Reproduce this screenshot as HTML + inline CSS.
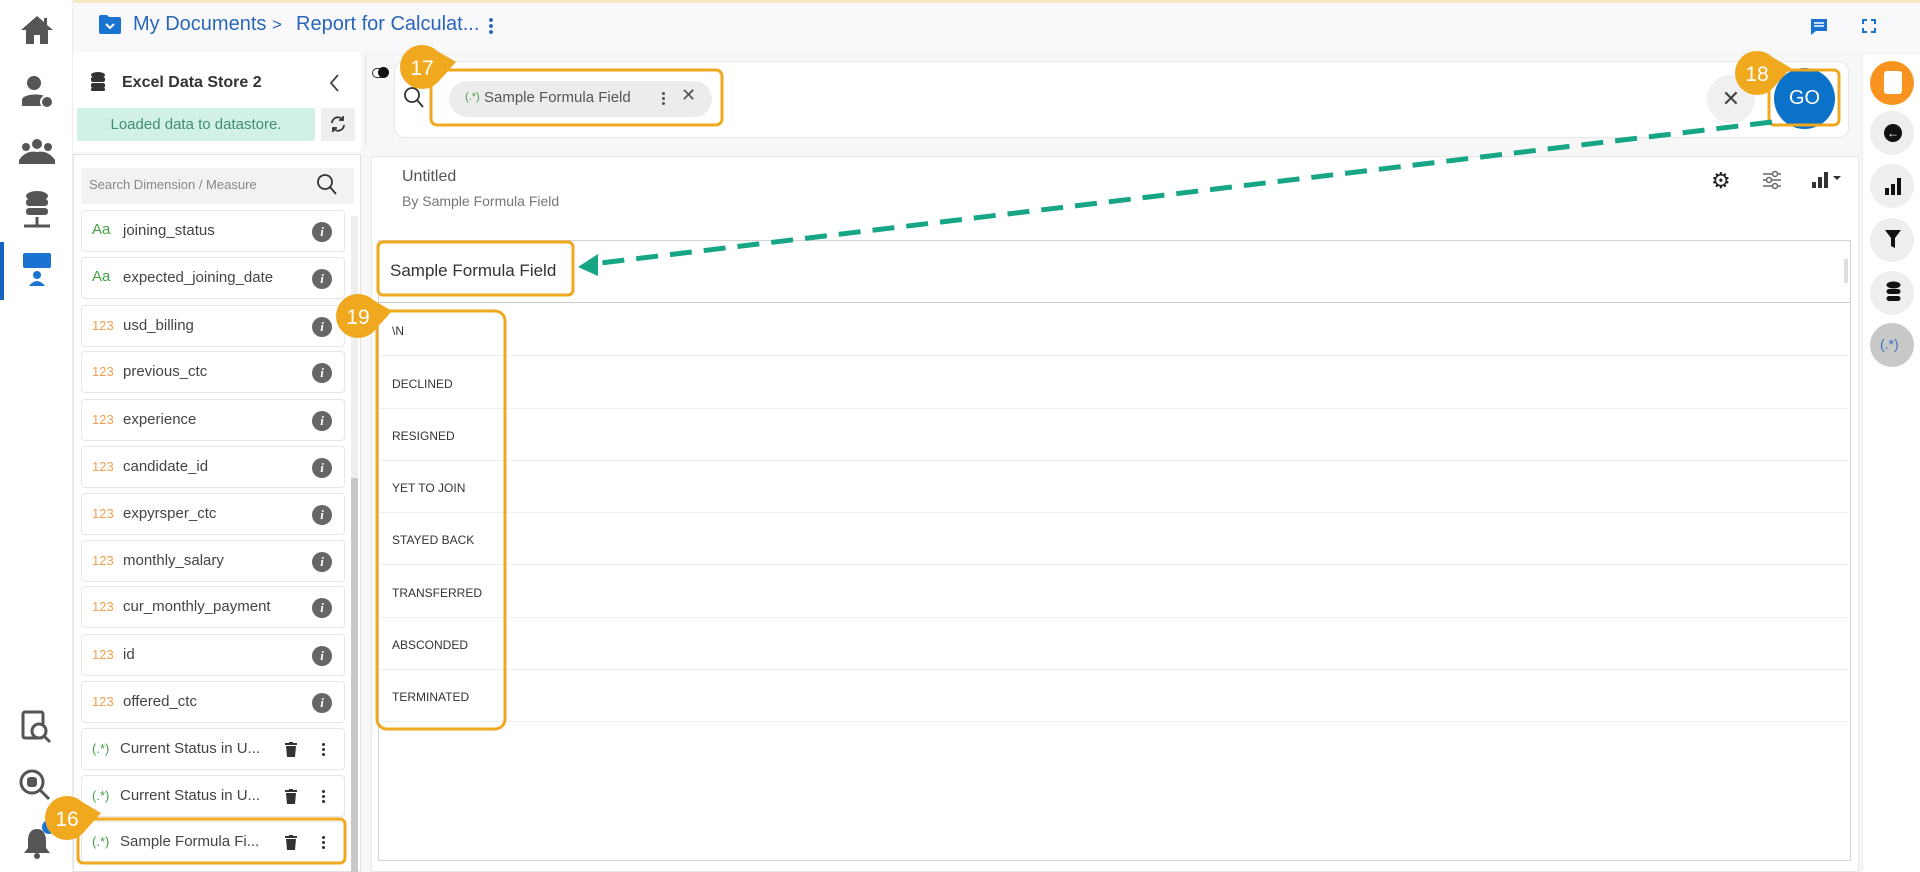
<!DOCTYPE html>
<html><head><meta charset="utf-8"><style>
*{margin:0;padding:0;box-sizing:border-box}
body{width:1920px;height:872px;overflow:hidden;background:#f7f7f8;font-family:"Liberation Sans",sans-serif;position:relative;color:#333}
.a{position:absolute}
.nav{left:0;top:0;width:73px;height:872px;background:#fff;border-right:1px solid #eee}
.item{position:absolute;left:81px;width:264px;height:42px;background:#fff;border:1px solid #e6e6e6;border-radius:4px;font-size:15px;color:#444}
.item .t{position:absolute;left:10px;top:12px;font-size:13px}
.item .n{position:absolute;left:41px;top:11px}
.item .i{position:absolute;right:12px;top:11px;width:20px;height:20px;border-radius:50%;background:#666;color:#fff;font:italic bold 13px "Liberation Serif",serif;text-align:center;line-height:20px}
.tr{position:absolute;left:203px;top:13px}
.dt{position:absolute;left:240px;top:13px;width:3px;height:15px;background:radial-gradient(circle,#333 1.4px,transparent 1.6px) 0 0/3px 5px}
.row{position:absolute;left:1px;right:1px;height:52px;border-bottom:1px solid #eee;font-size:12px;color:#333}
.row span{position:absolute;left:12px;top:20px}
.rc{position:absolute;left:1870px;width:44px;height:44px;border-radius:50%;background:#eee}
</style></head><body>
<div class="a" style="left:0;top:0;width:1920px;height:3px;background:#f5e6c4"></div>
<div class="a nav">
 <svg class="a" style="left:19px;top:14px" width="36" height="32" viewBox="0 0 36 32"><path d="M18 2 L2 16 H7 V30 H15 V21 H21 V30 H29 V16 H34 L28 11 V4 H25 V8 Z" fill="#555"/></svg>
 <svg class="a" style="left:19px;top:74px" width="36" height="36" viewBox="0 0 36 36"><circle cx="15" cy="9" r="7" fill="#555"/><path d="M3 32 V26 C3 19 27 19 27 24 V32Z" fill="#555"/><circle cx="28" cy="28" r="6" fill="#555" stroke="#fff" stroke-width="2"/></svg>
 <svg class="a" style="left:18px;top:138px" width="38" height="28" viewBox="0 0 38 28"><circle cx="19" cy="6" r="5" fill="#555"/><circle cx="8" cy="9" r="4" fill="#555"/><circle cx="30" cy="9" r="4" fill="#555"/><path d="M1 22 Q8 12 19 14 Q30 12 37 22 V26 H1Z" fill="#555"/></svg>
 <svg class="a" style="left:20px;top:190px" width="34" height="42" viewBox="0 0 34 42"><ellipse cx="17" cy="6" rx="11" ry="5" fill="#555"/><rect x="6" y="9" width="22" height="7" rx="3" fill="#555"/><rect x="6" y="18" width="22" height="7" rx="3" fill="#555"/><path d="M17 27V36M4 36H30" stroke="#555" stroke-width="3"/></svg>
 <div class="a" style="left:0;top:242px;width:4px;height:58px;background:#1565c0"></div>
 <svg class="a" style="left:22px;top:252px" width="30" height="36" viewBox="0 0 30 36"><rect x="1" y="1" width="28" height="15" rx="2" fill="#1a73d1"/><circle cx="15" cy="23" r="4" fill="#1a73d1"/><path d="M7 34Q15 24 23 34Z" fill="#1a73d1"/></svg>
 <svg class="a" style="left:20px;top:710px" width="32" height="34" viewBox="0 0 32 34"><rect x="3" y="2" width="20" height="26" rx="2" fill="none" stroke="#555" stroke-width="3"/><circle cx="19" cy="21" r="7" fill="#fff" stroke="#555" stroke-width="3"/><path d="M24 26l6 6" stroke="#555" stroke-width="3"/></svg>
 <svg class="a" style="left:18px;top:768px" width="34" height="34" viewBox="0 0 34 34"><circle cx="14" cy="14" r="11" fill="none" stroke="#555" stroke-width="3"/><path d="M22 22l9 9" stroke="#555" stroke-width="3"/><rect x="9" y="9" width="10" height="10" rx="3" fill="#555"/></svg>
 <svg class="a" style="left:20px;top:826px" width="34" height="34" viewBox="0 0 34 34"><path d="M17 3C10 3 8 9 8 15V22L4 27H30L26 22V15C26 9 24 3 17 3Z" fill="#555"/><circle cx="17" cy="30" r="3" fill="#555"/></svg>
 <div class="a" style="left:42px;top:820px;width:14px;height:14px;border-radius:50%;background:#1a73d1"></div>
</div>
<div class="a" style="left:74px;top:3px;width:1846px;height:49px;background:#f9f9fb"></div>
<svg class="a" style="left:98px;top:14px" width="24" height="21" viewBox="0 0 24 21"><path d="M1 3Q1 1 3 1H9L11 3H21Q23 3 23 5V18Q23 20 21 20H3Q1 20 1 18Z" fill="#1a73d1"/><path d="M8 10l4 4 4-4" stroke="#fff" stroke-width="2" fill="none"/></svg>
<div class="a" style="left:133px;top:13px;font-size:20px;color:#2a66b8">My Documents <span style="font-size:17px">&gt;</span></div>
<div class="a" style="left:296px;top:13px;font-size:20px;color:#2a66b8">Report for Calculat...</div>
<div class="a" style="left:489px;top:17px;width:4px;height:18px;background:radial-gradient(circle,#2a66b8 1.8px,transparent 2px) 0 0/4px 6px"></div>
<svg class="a" style="left:1810px;top:18px" width="18" height="18" viewBox="0 0 18 18"><path d="M1 1H17V13H6L1 17Z" fill="#1a73d1"/><path d="M4 5H14M4 8H14" stroke="#fff" stroke-width="1.5"/></svg>
<svg class="a" style="left:1862px;top:19px" width="14" height="14" viewBox="0 0 14 14" fill="none" stroke="#1a73d1" stroke-width="2"><path d="M1 5V1H5M9 1H13V5M13 9V13H9M5 13H1V9"/></svg>
<div class="a" style="left:73px;top:52px;width:288px;height:100px;background:#fff"></div>
<svg class="a" style="left:90px;top:72px" width="16" height="20" viewBox="0 0 16 20"><ellipse cx="8" cy="3" rx="7" ry="3" fill="#333"/><rect x="1" y="5" width="14" height="5" rx="2" fill="#333"/><rect x="1" y="11" width="14" height="5" rx="2" fill="#333"/><rect x="1" y="16" width="14" height="3" rx="1" fill="#333"/></svg>
<div class="a" style="left:122px;top:74px;font-size:16px;font-weight:bold;color:#333">Excel Data Store 2</div>
<svg class="a" style="left:329px;top:73px" width="12" height="20" viewBox="0 0 12 20"><path d="M9 2L2 10L9 18" fill="none" stroke="#444" stroke-width="1.8"/></svg>
<div class="a" style="left:77px;top:108px;width:238px;height:33px;background:#d2f1e6;border-radius:2px;color:#3e8f6f;font-size:15px;text-align:center;line-height:33px">Loaded data to datastore.</div>
<div class="a" style="left:321px;top:108px;width:34px;height:33px;background:#eee"></div>
<svg class="a" style="left:329px;top:115px" width="18" height="18" viewBox="0 0 18 18" fill="none" stroke="#333" stroke-width="1.8"><path d="M3 8A6 6 0 0 1 14 5M15 10A6 6 0 0 1 4 13"/><path d="M14 1V5H10M4 17V13H8"/></svg>
<div class="a" style="left:365px;top:55px;width:1px;height:90px;background:#ddd"></div>
<div class="a" style="left:73px;top:154px;width:288px;height:718px;background:#fff;border:1px solid #e2e2e2"></div>
<div class="a" style="left:81px;top:168px;width:273px;height:36px;background:#f2f2f2"></div>
<div class="a" style="left:89px;top:177px;font-size:13px;color:#888">Search Dimension / Measure</div>
<svg class="a" style="left:316px;top:173px" width="22" height="24" viewBox="0 0 22 24"><circle cx="9" cy="9" r="7" fill="none" stroke="#333" stroke-width="1.8"/><path d="M14 14l6 7" stroke="#333" stroke-width="1.8"/></svg>
<div class="a" style="left:351px;top:216px;width:7px;height:656px;background:#eee"></div>
<div class="a" style="left:351px;top:478px;width:7px;height:394px;background:#c8c8c8"></div>
<div class="item" style="top:210px"><span class="t" style="color:#43a047;font-size:15px;top:10px">Aa</span><span class="n">joining_status</span><span class="i">i</span></div>
<div class="item" style="top:257px"><span class="t" style="color:#43a047;font-size:15px;top:10px">Aa</span><span class="n">expected_joining_date</span><span class="i">i</span></div>
<div class="item" style="top:305px"><span class="t" style="color:#f0a050">123</span><span class="n">usd_billing</span><span class="i">i</span></div>
<div class="item" style="top:351px"><span class="t" style="color:#f0a050">123</span><span class="n">previous_ctc</span><span class="i">i</span></div>
<div class="item" style="top:399px"><span class="t" style="color:#f0a050">123</span><span class="n">experience</span><span class="i">i</span></div>
<div class="item" style="top:446px"><span class="t" style="color:#f0a050">123</span><span class="n">candidate_id</span><span class="i">i</span></div>
<div class="item" style="top:493px"><span class="t" style="color:#f0a050">123</span><span class="n">expyrsper_ctc</span><span class="i">i</span></div>
<div class="item" style="top:540px"><span class="t" style="color:#f0a050">123</span><span class="n">monthly_salary</span><span class="i">i</span></div>
<div class="item" style="top:586px"><span class="t" style="color:#f0a050">123</span><span class="n">cur_monthly_payment</span><span class="i">i</span></div>
<div class="item" style="top:634px"><span class="t" style="color:#f0a050">123</span><span class="n">id</span><span class="i">i</span></div>
<div class="item" style="top:681px"><span class="t" style="color:#f0a050">123</span><span class="n">offered_ctc</span><span class="i">i</span></div>
<div class="item" style="top:728px"><span class="t" style="color:#43a047;top:12px">(.*)</span><span class="n" style="left:38px">Current Status in U...</span><svg class="tr" width="12" height="15" viewBox="0 0 12 15"><path d="M0 2H12M4 0H8" stroke="#333" stroke-width="2"/><path d="M1 4H11L10 15H2Z" fill="#333"/></svg><span class="dt"></span></div>
<div class="item" style="top:775px"><span class="t" style="color:#43a047;top:12px">(.*)</span><span class="n" style="left:38px">Current Status in U...</span><svg class="tr" width="12" height="15" viewBox="0 0 12 15"><path d="M0 2H12M4 0H8" stroke="#333" stroke-width="2"/><path d="M1 4H11L10 15H2Z" fill="#333"/></svg><span class="dt"></span></div>
<div class="item" style="top:821px"><span class="t" style="color:#43a047;top:12px">(.*)</span><span class="n" style="left:38px">Sample Formula Fi...</span><svg class="tr" width="12" height="15" viewBox="0 0 12 15"><path d="M0 2H12M4 0H8" stroke="#333" stroke-width="2"/><path d="M1 4H11L10 15H2Z" fill="#333"/></svg><span class="dt"></span></div>
<div class="a" style="left:372px;top:68px;width:14px;height:10px;border-radius:5px;border:1.5px solid #333"></div>
<div class="a" style="left:378px;top:67px;width:11px;height:11px;border-radius:50%;background:#111"></div>
<div class="a" style="left:394px;top:61px;width:1455px;height:77px;background:#fff;border:1px solid #e6e6e6;border-radius:10px"></div>
<svg class="a" style="left:403px;top:86px" width="22" height="24" viewBox="0 0 22 24"><circle cx="9" cy="9" r="7" fill="none" stroke="#333" stroke-width="1.8"/><path d="M14 14l6 7" stroke="#333" stroke-width="1.8"/></svg>
<div class="a" style="left:449px;top:81px;width:263px;height:36px;background:#ececec;border-radius:18px"></div>
<div class="a" style="left:465px;top:91px;font-size:11px;color:#43a047">(.*)</div>
<div class="a" style="left:484px;top:89px;font-size:15px;color:#555">Sample Formula Field</div>
<div class="a" style="left:662px;top:91px;width:3px;height:14px;background:radial-gradient(circle,#555 1.4px,transparent 1.6px) 0 0/3px 5px"></div>
<div class="a" style="left:681px;top:85px;font-size:18px;color:#555">✕</div>
<div class="a" style="left:1707px;top:75px;width:48px;height:48px;border-radius:50%;background:#f0f0f0;text-align:center;line-height:48px;font-size:22px;color:#444">✕</div>
<div class="a" style="left:1774px;top:68px;width:61px;height:61px;border-radius:50%;background:#0a72c8;color:#fff;text-align:center;line-height:61px;font-size:20px">GO</div>
<div class="a" style="left:371px;top:156px;width:1488px;height:716px;background:#fff;border:1px solid #e8e8e8"></div>
<div class="a" style="left:402px;top:168px;font-size:16px;color:#555">Untitled</div>
<div class="a" style="left:402px;top:193px;font-size:14px;color:#777">By Sample Formula Field</div>
<div class="a" style="left:1711px;top:168px;font-size:22px;color:#222">⚙</div>
<svg class="a" style="left:1762px;top:170px" width="20" height="20" viewBox="0 0 20 20" fill="none" stroke="#666" stroke-width="1.5"><path d="M1 4H19M1 10H19M1 16H19"/><circle cx="13" cy="4" r="2.5" fill="#fff"/><circle cx="7" cy="10" r="2.5" fill="#fff"/><circle cx="13" cy="16" r="2.5" fill="#fff"/></svg>
<svg class="a" style="left:1811px;top:170px" width="34" height="20" viewBox="0 0 34 20"><rect x="1" y="12" width="4" height="6" fill="#333"/><rect x="7" y="7" width="4" height="11" fill="#333"/><rect x="13" y="2" width="4" height="16" fill="#333"/><path d="M22 6H30L26 10Z" fill="#333"/></svg>
<div class="a" style="left:378px;top:240px;width:1473px;height:621px;border:1px solid #d4d4d4;background:#fff">
 <div class="a" style="left:0;top:0;right:0;height:62px;border-bottom:1.5px solid #ccc"></div>
 <div class="a" style="left:11px;top:20px;font-size:17px;color:#333">Sample Formula Field</div>
 <div class="a" style="right:2px;top:18px;width:4px;height:24px;background:#ddd"></div>
 <div class="row" style="top:63px"><span>\N</span></div>
 <div class="row" style="top:116px"><span>DECLINED</span></div>
 <div class="row" style="top:168px"><span>RESIGNED</span></div>
 <div class="row" style="top:220px"><span>YET TO JOIN</span></div>
 <div class="row" style="top:272px"><span>STAYED BACK</span></div>
 <div class="row" style="top:325px"><span>TRANSFERRED</span></div>
 <div class="row" style="top:377px"><span>ABSCONDED</span></div>
 <div class="row" style="top:429px"><span>TERMINATED</span></div>
</div>
<div class="a" style="left:1862px;top:55px;width:58px;height:817px;background:#fff;border-left:1px solid #eee"></div>
<div class="rc" style="top:61px;background:#f7931e"></div>
<div class="a" style="left:1884px;top:71px;width:18px;height:23px;background:#fff;border-radius:3px"></div>
<div class="rc" style="top:111px"></div>
<div class="a" style="left:1884px;top:124px;width:18px;height:18px;border-radius:50%;background:#111;color:#fff;font-size:12px;text-align:center;line-height:18px;font-weight:bold">←</div>
<div class="rc" style="top:164px"></div>
<svg class="a" style="left:1883px;top:176px" width="20" height="20" viewBox="0 0 20 20"><rect x="2" y="12" width="4" height="7" fill="#111"/><rect x="8" y="8" width="4" height="11" fill="#111"/><rect x="14" y="2" width="4" height="17" fill="#111"/></svg>
<div class="rc" style="top:218px"></div>
<svg class="a" style="left:1884px;top:228px" width="18" height="22" viewBox="0 0 18 22"><path d="M1 2H17L11 10V20L7 18V10Z" fill="#111"/></svg>
<div class="rc" style="top:271px"></div>
<svg class="a" style="left:1886px;top:281px" width="15" height="22" viewBox="0 0 15 22"><ellipse cx="7.5" cy="4" rx="7" ry="3.5" fill="#111"/><rect x="0.5" y="8" width="14" height="5" rx="2.5" fill="#111"/><rect x="0.5" y="15" width="14" height="5" rx="2.5" fill="#111"/></svg>
<div class="rc" style="top:323px;background:#c8c8c8"></div>
<div class="a" style="left:1880px;top:336px;font-size:14px;color:#3a6fc4">(.*)</div>
<svg class="a" style="left:0;top:0" width="1920" height="872" viewBox="0 0 1920 872">
 <g fill="none" stroke="#f0a81e" stroke-width="3">
  <rect x="431" y="70" width="291" height="55" rx="6"/>
  <rect x="1769" y="70" width="70" height="55" rx="5"/>
  <rect x="378" y="242" width="195" height="53" rx="5"/>
  <rect x="377" y="311" width="128" height="418" rx="10"/>
  <rect x="78" y="819" width="267" height="44" rx="5"/>
 </g>
 <path d="M1772 122 L592 264" stroke="#16a585" stroke-width="5" stroke-dasharray="22 12"/>
 <path d="M578 267 L598 254 L598 276 Z" fill="#16a585"/>
 <g fill="#f0a81e">
  <circle cx="422" cy="67" r="22"/><path d="M432 48 L456 62 L438 82Z"/>
  <circle cx="1757" cy="73" r="22"/><path d="M1767 54 L1791 68 L1773 88Z"/>
  <circle cx="358" cy="316" r="22"/><path d="M368 297 L392 311 L374 331Z"/>
  <circle cx="67" cy="818" r="22"/><path d="M77 799 L101 813 L83 833Z"/>
 </g>
 <g fill="#fff" font-family="Liberation Sans, sans-serif" font-size="21" text-anchor="middle">
  <text x="422" y="75">17</text><text x="1757" y="81">18</text><text x="358" y="324">19</text><text x="67" y="826">16</text>
 </g>
</svg>
</body></html>
